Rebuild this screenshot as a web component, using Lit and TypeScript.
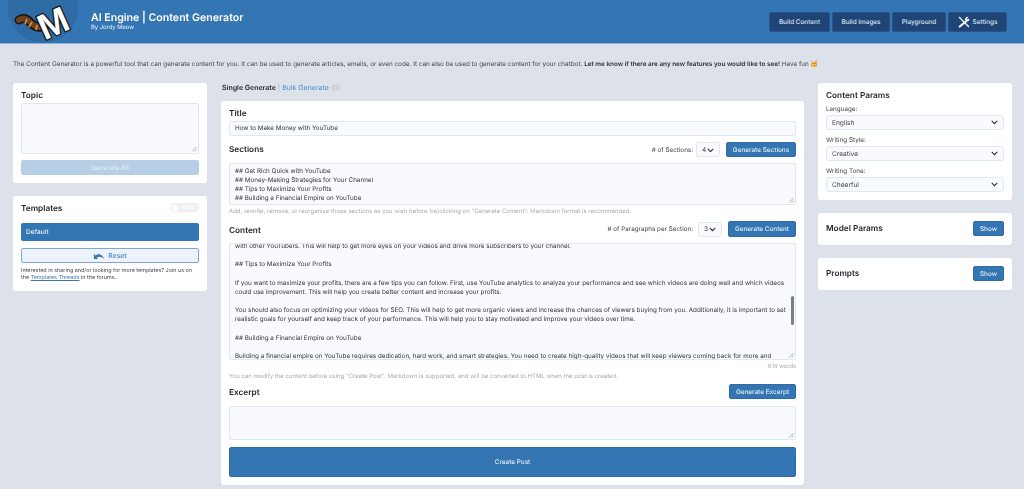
import { LitElement, html, css, svg } from "lit";
import { customElement } from "lit/decorators.js";

const chevron = html`<svg class="chev" viewBox="0 0 10 6"><path d="M1 1l4 4 4-4" fill="none" stroke="currentColor" stroke-width="1.5"/></svg>`;
const grip = html`<svg class="grip" viewBox="0 0 6 6"><path d="M5.5 1L1 5.5M5.5 3.5L3.5 5.5" stroke="#8a8f98" stroke-width=".7"/></svg>`;

const logo = svg`<svg class="logo" viewBox="0 0 90 43">
  <circle cx="43" cy="8" r="35" fill="#2f6ca5"/>
  <path d="M19 20c5-3 8-1 12 3 3 3 6 5 11 4" fill="none" stroke="#141414" stroke-width="9" stroke-linecap="round"/>
  <path d="M19 20c5-3 8-1 12 3 3 3 6 5 11 4" fill="none" stroke="#6e4020" stroke-width="6" stroke-linecap="round"/>
  <path d="M27 19l-2 5M32 22l-3 5M37 25l-1 5" stroke="#c98f45" stroke-width="1.8"/>
  <text x="37" y="34.5" transform="rotate(-24 55 20)" font-family="Liberation Sans, sans-serif" font-weight="700" font-size="36" fill="#fff" stroke="#111" stroke-width="2.6" paint-order="stroke" stroke-linejoin="round">M</text>
</svg>`;

const contentText = `with other YouTubers. This will help to get more eyes on your videos and drive more subscribers to your channel.

## Tips to Maximize Your Profits

If you want to maximize your profits, there are a few tips you can follow. First, use YouTube analytics to analyze your performance and see which videos are doing well and which videos
could use improvement. This will help you create better content and increase your profits.

You should also focus on optimizing your videos for SEO. This will help to get more organic views and increase the chances of viewers buying from you. Additionally, it is important to set
realistic goals for yourself and keep track of your performance. This will help you to stay motivated and improve your videos over time.

## Building a Financial Empire on YouTube

Building a financial empire on YouTube requires dedication, hard work, and smart strategies. You need to create high-quality videos that will keep viewers coming back for more and`;

@customElement("app-root")
export class AppRoot extends LitElement {
  static styles = css`
    :host { display: block; width: 1024px; height: 489px; overflow: hidden; background: #dde2ea; font-family: Inter, "Liberation Sans", sans-serif; font-size: 7px; color: #3a3f47; text-rendering: geometricPrecision; }
    * { box-sizing: border-box; }
    .top { height: 44px; background: #3376b3; border-bottom: 1px solid #8fb3d6; display: flex; align-items: center; padding-right: 17px; overflow: hidden; }
    .logo { width: 90px; height: 43px; flex: none; display: block; overflow: hidden; }
    .brand { margin-left: 1px; flex: 1; color: #fff; padding-bottom: 1px; will-change: transform; }
    .brand h1 { margin: 0; font-size: 10.6px; line-height: 13px; font-weight: 600; }
    .brand div { font-size: 5.8px; line-height: 8px; color: #d8e5f2; font-weight: 500; }
    nav { display: flex; gap: 2px; }
    nav button { height: 20px; border: 1px solid #2a528a; border-radius: 2px; background: #1f4577; color: #dfe6ef; font: 500 6.4px Inter, sans-serif; text-rendering: geometricPrecision; padding: 0; display: flex; align-items: center; justify-content: center; gap: 3px; }
    nav svg { width: 12px; height: 12px; }
    .n1 { width: 61px; } .n2 { width: 58px; } .n3 { width: 54px; } .n4 { width: 59px; }
    .intro { margin: 0; padding: 16px 13px 0; height: 39px; line-height: 9px; font-size: 6.37px; white-space: nowrap; color: #42464f; will-change: transform; }
    .intro b { font-weight: 600; color: #2c3036; }
    .cols { display: grid; grid-template-columns: 194px 583px 194px; gap: 14px; padding: 0 13px; align-items: start; will-change: transform; }
    .col { display: flex; flex-direction: column; gap: 13px; }
    .mid { gap: 0; }
    .tabs { height: 18px; line-height: 9px; color: #b4b8bf; font-size: 7px; padding-left: 1px; }
    .tabs b { color: #1f2328; font-weight: 600; }
    .tabs a { color: #4f8ac4; }
    .card { background: #fff; border-radius: 3px; padding: 8px; display: flex; flex-direction: column; }
    h2 { margin: 0; font-size: 8.25px; line-height: 11px; font-weight: 600; color: #23272d; }
    .box { background: #f9fafd; border: 1px solid #dce8f4; border-radius: 2px; position: relative; overflow: hidden; color: #33373e; font-size: 6.3px; }
    .grip { position: absolute; right: 1px; bottom: 1px; width: 6px; height: 6px; }
    .btn { border: 1px solid #2f6ba5; border-radius: 2px; background: #3376b3; color: #e6eef6; font: 500 6.4px Inter, sans-serif; text-rendering: geometricPrecision; padding: 0; display: flex; align-items: center; justify-content: center; height: 15px; }
    .row { display: flex; align-items: center; justify-content: space-between; }
    .tools { display: flex; align-items: center; font-size: 6.3px; color: #42464f; }
    .sel { height: 15px; border: 1px solid #dce8f4; border-radius: 3px; background: #f9fafd; display: flex; align-items: center; justify-content: space-between; padding: 0 5px; color: #3e434b; font-size: 6.6px; }
    .small { width: 24px; margin-right: 6px; }
    .t-sec .small { margin-left: 3px; }
    .t-par .small { margin-left: 5px; }
    .b-sec { width: 70px; }
    .b-con { width: 68px; height: 16px; }
    .b-exc { width: 67px; }
    .chev { width: 7px; height: 4.5px; color: #2b2f35; flex: none; }
    .note { color: #a7abb3; font-size: 6px; line-height: 8px; }
    .lines { white-space: pre; line-height: 9.15px; font-size: 6.3px; padding: 0 5px; }

    .topic { height: 100px; }
    .topic h2 { margin-top: -1px; margin-bottom: 5px; }
    .topic .box { height: 52px; margin-top: -3px; }
    .topic .btn { margin-top: 6px; background: #b6cfe5; border-color: #b6cfe5; color: #e3ecf5; }
    .tpl { height: 95px; }
    .tpl .row { height: 9px; }
    .toggle { width: 29px; height: 9px; margin-top: -2px; border-radius: 5px; background: #eef0f3; color: #fff; font-size: 5.2px; font-weight: 600; display: flex; align-items: center; gap: 4px; padding-left: 1px; }
    .toggle i { width: 6px; height: 6px; border-radius: 50%; background: #fff; margin-left: 1px; }
    .def { height: 18px; margin-top: 10px; background: #3376b3; border-radius: 2px; color: #e6eef6; font-weight: 500; font-size: 6.6px; display: flex; align-items: center; padding-left: 5px; }
    .reset { height: 15px; margin-top: 7px; background: #ecf3fc; border: 1px solid #7fa6d0; border-radius: 2px; color: #4a86c0; font-size: 6.8px; font-weight: 500; display: flex; align-items: center; justify-content: center; gap: 3px; }
    .reset svg { width: 12px; height: 8px; }
    .tnote { margin-top: 5px; line-height: 7px; font-size: 5.42px; color: #42464f; white-space: nowrap; }
    .tnote a { color: #3f77ad; text-decoration: underline; }

    .main { height: 384px; padding-top: 7px; }
    .f-title { height: 15px; margin-top: 2px; line-height: 13px; padding-left: 5px; }
    .h-row { height: 16px; }
    .sec { margin-top: 5px; height: 43px; padding-top: 3px; }
    .h1 { margin-top: 6px; }
    .help { margin-top: 3px; height: 8px; }
    .h2 { margin-top: 5px; }
    .h2 h2, .h3 h2 { margin-top: 2px; }
    .con { margin-top: 6px; height: 117px; }
    .con .lines { margin-top: -2.4px; }
    .bar { position: absolute; right: 1px; top: 52px; width: 3px; height: 29px; border-radius: 2px; background: #7b7e84; }
    .words { text-align: right; height: 14px; line-height: 13px; font-size: 5.8px; color: #a7abb3; }
    .h3 { margin-top: 3px; height: 15px; }
    .exc { margin-top: 7px; height: 34px; }
    .create { height: 30px; margin-top: 7px; }

    .params { height: 117px; padding-left: 8px; }
    .params h2 { margin-top: -1px; }
    .params label { display: block; height: 9px; line-height: 11px; font-size: 6.3px; color: #42464f; margin-top: 5px; }
    .params .sel { margin-top: 2px; height: 15px; }
    .params label.first { margin-top: 3px; }
    .mini { height: 32px; flex-direction: row; align-items: center; justify-content: space-between; }
    .mini h2 { margin-top: -2px; }
    .mini .btn { width: 31px; height: 15px; margin-top: -1px; }
  `;

  private select(v: string, cls = "") {
    return html`<div class="sel ${cls}"><span>${v}</span>${chevron}</div>`;
  }

  render() {
    return html`
      <header class="top">
        ${logo}
        <div class="brand"><h1>AI Engine | Content Generator</h1><div>By Jordy Meow</div></div>
        <nav>
          <button class="n1">Build Content</button>
          <button class="n2">Build Images</button>
          <button class="n3">Playground</button>
          <button class="n4">
            <svg viewBox="0 0 12 12"><path d="M1.5 1.5l9 9" stroke="#fff" stroke-width="1.3" stroke-linecap="round"/><path d="M7.5 5.8L1.8 10.6" stroke="#fff" stroke-width="2" stroke-linecap="round"/><path d="M7.2 3.4a2.5 2.5 0 0 1 3.3-2.6L9 2.4l.7 1 1.5-1a2.5 2.5 0 0 1-3.4 3z" fill="#fff"/></svg>
            Settings
          </button>
        </nav>
      </header>
      <p class="intro">The Content Generator is a powerful tool that can generate content for you. It can be used to generate articles, emails, or even code. It can also be used to generate content for your chatbot. <b>Let me know if there are any new features you would like to see!</b> Have fun 🥳</p>
      <div class="cols">
        <div class="col">
          <section class="card topic">
            <h2>Topic</h2>
            <div class="box">${grip}</div>
            <div class="btn">Generate All</div>
          </section>
          <section class="card tpl">
            <div class="row"><h2>Templates</h2><div class="toggle"><i></i>EDIT</div></div>
            <div class="def">Default</div>
            <div class="reset">
              <svg viewBox="0 0 14 9"><path d="M1 2v6h5L4.4 6.2C7 4.5 10 5.2 13 8 11.5 3.5 7 .8 3 3.8z" fill="#3f77ad"/></svg>
              Reset
            </div>
            <div class="tnote">Interested in sharing and/or looking for more templates? Join us on<br/>the <a>Templates Threads</a> in the forums.</div>
          </section>
        </div>
        <div class="col mid">
          <div class="tabs"><b>Single Generate</b> | <a>Bulk Generate</a> (0)</div>
          <section class="card main">
            <h2>Title</h2>
            <div class="box f-title">How to Make Money with YouTube</div>
            <div class="row h-row h1">
              <h2>Sections</h2>
              <div class="tools t-sec"><span># of Sections:</span>${this.select("4", "small")}<div class="btn b-sec">Generate Sections</div></div>
            </div>
            <div class="box sec"><div class="lines">## Get Rich Quick with YouTube
## Money-Making Strategies for Your Channel
## Tips to Maximize Your Profits
## Building a Financial Empire on YouTube</div>${grip}</div>
            <div class="note help">Add, rewrite, remove, or reorganize those sections as you wish before (re)clicking on "Generate Content". Markdown format is recommended.</div>
            <div class="row h-row h2">
              <h2>Content</h2>
              <div class="tools t-par"><span># of Paragraphs per Section:</span>${this.select("3", "small")}<div class="btn b-con">Generate Content</div></div>
            </div>
            <div class="box con"><div class="lines">${contentText}</div><div class="bar"></div>${grip}</div>
            <div class="words">614 words</div>
            <div class="note">You can modify the content before using "Create Post". Markdown is supported, and will be converted to HTML when the post is created.</div>
            <div class="row h-row h3">
              <h2>Excerpt</h2>
              <div class="btn b-exc">Generate Excerpt</div>
            </div>
            <div class="box exc">${grip}</div>
            <div class="btn create">Create Post</div>
          </section>
        </div>
        <div class="col">
          <section class="card params">
            <h2>Content Params</h2>
            <label class="first">Language:</label>${this.select("English")}
            <label>Writing Style:</label>${this.select("Creative")}
            <label>Writing Tone:</label>${this.select("Cheerful")}
          </section>
          <section class="card mini"><h2>Model Params</h2><div class="btn">Show</div></section>
          <section class="card mini"><h2>Prompts</h2><div class="btn">Show</div></section>
        </div>
      </div>
    `;
  }
}
